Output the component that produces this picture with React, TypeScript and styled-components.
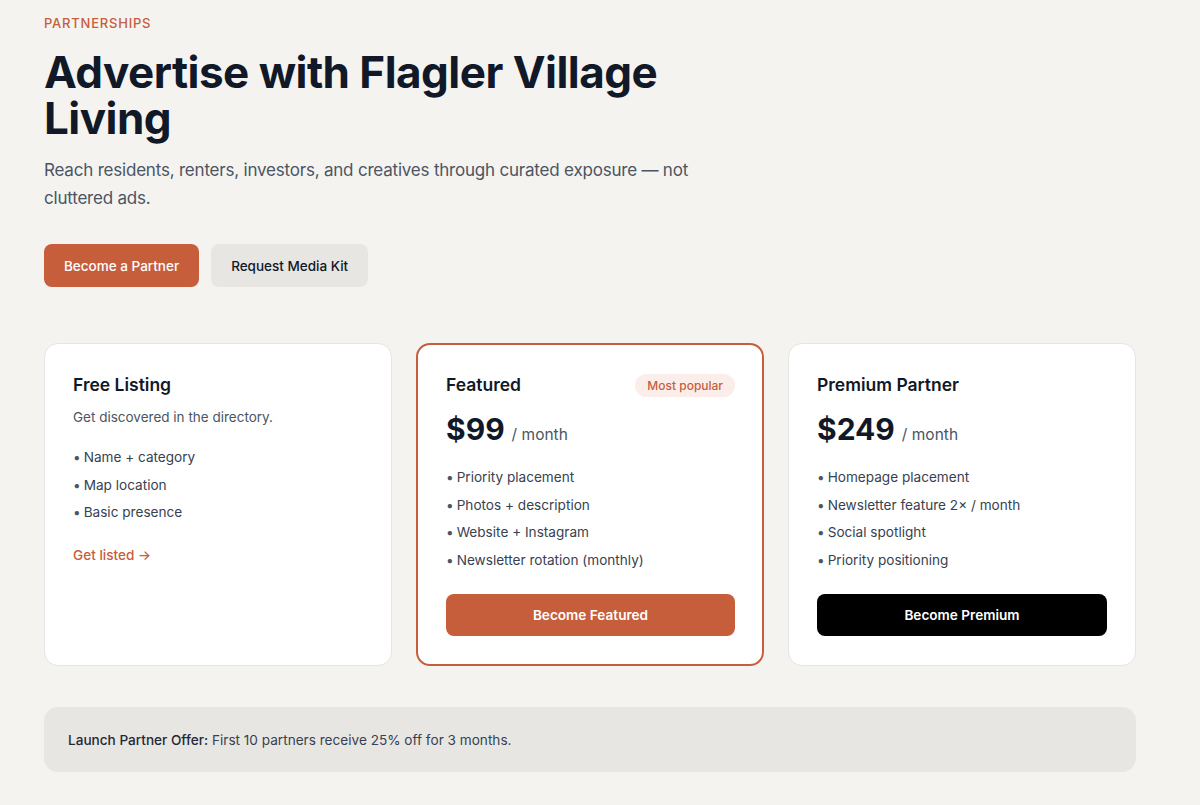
import React from 'react';
import styled, { createGlobalStyle } from 'styled-components';

const GlobalStyle = createGlobalStyle`
  * { box-sizing: border-box; }
  body {
    margin: 0;
    background: #f4f3f0;
    font-family: Inter, "Noto Sans", "Liberation Sans", sans-serif;
    color: #111827;
    -webkit-font-smoothing: antialiased;
  }
`;

const Page = styled.main`
  padding: 13px 0 40px 44px;
  width: 1136px;
`;

const Eyebrow = styled.div`
  font-size: 13px;
  line-height: 20px;
  letter-spacing: 0.06em;
  color: #c65d3b;
  font-weight: 500;
`;

const Title = styled.h1`
  margin: 16px 0 0;
  max-width: 670px;
  font-size: 44px;
  line-height: 46px;
  font-weight: 700;
  letter-spacing: -0.012em;
  color: #111827;
`;

const Lead = styled.p`
  margin: 15px 0 0;
  max-width: 680px;
  font-size: 17px;
  line-height: 28px;
  letter-spacing: -0.012em;
  color: #4b5563;
`;

const Actions = styled.div`
  display: flex;
  gap: 12px;
  margin-top: 32px;
`;

const HeroButton = styled.button<{ $primary?: boolean }>`
  height: 43px;
  padding: 0 20px;
  border: none;
  border-radius: 8px;
  font-family: inherit;
  font-size: 13.5px;
  font-weight: 500;
  background: ${p => (p.$primary ? '#c65d3b' : '#e8e6e2')};
  color: ${p => (p.$primary ? '#ffffff' : '#111827')};
  cursor: pointer;
`;

const Plans = styled.section`
  display: grid;
  grid-template-columns: repeat(3, 1fr);
  gap: 24px;
  margin-top: 56px;
`;

const Card = styled.div<{ $highlight?: boolean }>`
  display: flex;
  flex-direction: column;
  min-height: 323px;
  padding: ${p => (p.$highlight ? '27px 27px 27px 28px' : '28px')};
  background: #ffffff;
  border: ${p => (p.$highlight ? '2px solid #c65d3b' : '1px solid #e5e5e7')};
  border-radius: 14px;
`;

const CardHead = styled.div`
  display: flex;
  align-items: center;
  justify-content: space-between;
  height: 26px;
`;

const CardTitle = styled.h3`
  margin: 0;
  font-size: 17.5px;
  line-height: 26px;
  font-weight: 600;
  color: #111827;
`;

const Badge = styled.span`
  padding: 0 12px;
  height: 23px;
  display: inline-flex;
  align-items: center;
  border-radius: 999px;
  background: #fbeeea;
  color: #c65d3b;
  font-size: 12px;
  font-weight: 500;
`;

const CardDesc = styled.p`
  margin: 9px 0 0;
  font-size: 13.5px;
  line-height: 20px;
  color: #4b5563;
`;

const Price = styled.div`
  margin-top: 13px;
  display: flex;
  align-items: baseline;
  gap: 7px;
`;

const Amount = styled.span`
  font-size: 30px;
  line-height: 36px;
  font-weight: 700;
  color: #111827;
`;

const Per = styled.span`
  font-size: 15.5px;
  color: #4b5563;
`;

const Features = styled.ul`
  list-style: none;
  margin: 20px 0 0;
  padding: 0;
  display: flex;
  flex-direction: column;
  gap: 7.6px;
`;

const Feature = styled.li`
  font-size: 13.6px;
  line-height: 20px;
  color: #374151;
  &::before {
    content: '•';
    margin-right: 3px;
    color: #4b5563;
  }
`;

const TextLink = styled.a`
  margin-top: 23px;
  font-size: 13.6px;
  line-height: 20px;
  font-weight: 500;
  color: #c65d3b;
  text-decoration: none;
`;

const PlanButton = styled.button<{ $tone: 'accent' | 'dark' }>`
  margin-top: 24px;
  height: 42px;
  width: 100%;
  border: none;
  border-radius: 8px;
  font-family: inherit;
  font-size: 13.6px;
  font-weight: 600;
  color: #ffffff;
  background: ${p => (p.$tone === 'accent' ? '#c65d3b' : '#000000')};
  cursor: pointer;
`;

const Offer = styled.div`
  margin-top: 41px;
  height: 65px;
  padding: 0 24px;
  display: flex;
  align-items: center;
  background: #e8e6e2;
  border-radius: 14px;
  font-size: 13.6px;
  color: #374151;
  strong { font-weight: 500; color: #1f2937; }
`;

export default function App() {
  return (
    <>
      <GlobalStyle />
      <Page>
        <Eyebrow>PARTNERSHIPS</Eyebrow>
        <Title>Advertise with Flagler Village Living</Title>
        <Lead>
          Reach residents, renters, investors, and creatives through curated exposure — not cluttered ads.
        </Lead>
        <Actions>
          <HeroButton $primary>Become a Partner</HeroButton>
          <HeroButton>Request Media Kit</HeroButton>
        </Actions>

        <Plans>
          <Card>
            <CardHead>
              <CardTitle>Free Listing</CardTitle>
            </CardHead>
            <CardDesc>Get discovered in the directory.</CardDesc>
            <Features>
              <Feature>Name + category</Feature>
              <Feature>Map location</Feature>
              <Feature>Basic presence</Feature>
            </Features>
            <TextLink href="#">Get listed →</TextLink>
          </Card>

          <Card $highlight>
            <CardHead>
              <CardTitle>Featured</CardTitle>
              <Badge>Most popular</Badge>
            </CardHead>
            <Price>
              <Amount>$99</Amount>
              <Per>/ month</Per>
            </Price>
            <Features>
              <Feature>Priority placement</Feature>
              <Feature>Photos + description</Feature>
              <Feature>Website + Instagram</Feature>
              <Feature>Newsletter rotation (monthly)</Feature>
            </Features>
            <PlanButton $tone="accent">Become Featured</PlanButton>
          </Card>

          <Card>
            <CardHead>
              <CardTitle>Premium Partner</CardTitle>
            </CardHead>
            <Price>
              <Amount>$249</Amount>
              <Per>/ month</Per>
            </Price>
            <Features>
              <Feature>Homepage placement</Feature>
              <Feature>Newsletter feature 2× / month</Feature>
              <Feature>Social spotlight</Feature>
              <Feature>Priority positioning</Feature>
            </Features>
            <PlanButton $tone="dark">Become Premium</PlanButton>
          </Card>
        </Plans>

        <Offer>
          <span>
            <strong>Launch Partner Offer:</strong> First 10 partners receive 25% off for 3 months.
          </span>
        </Offer>
      </Page>
    </>
  );
}
